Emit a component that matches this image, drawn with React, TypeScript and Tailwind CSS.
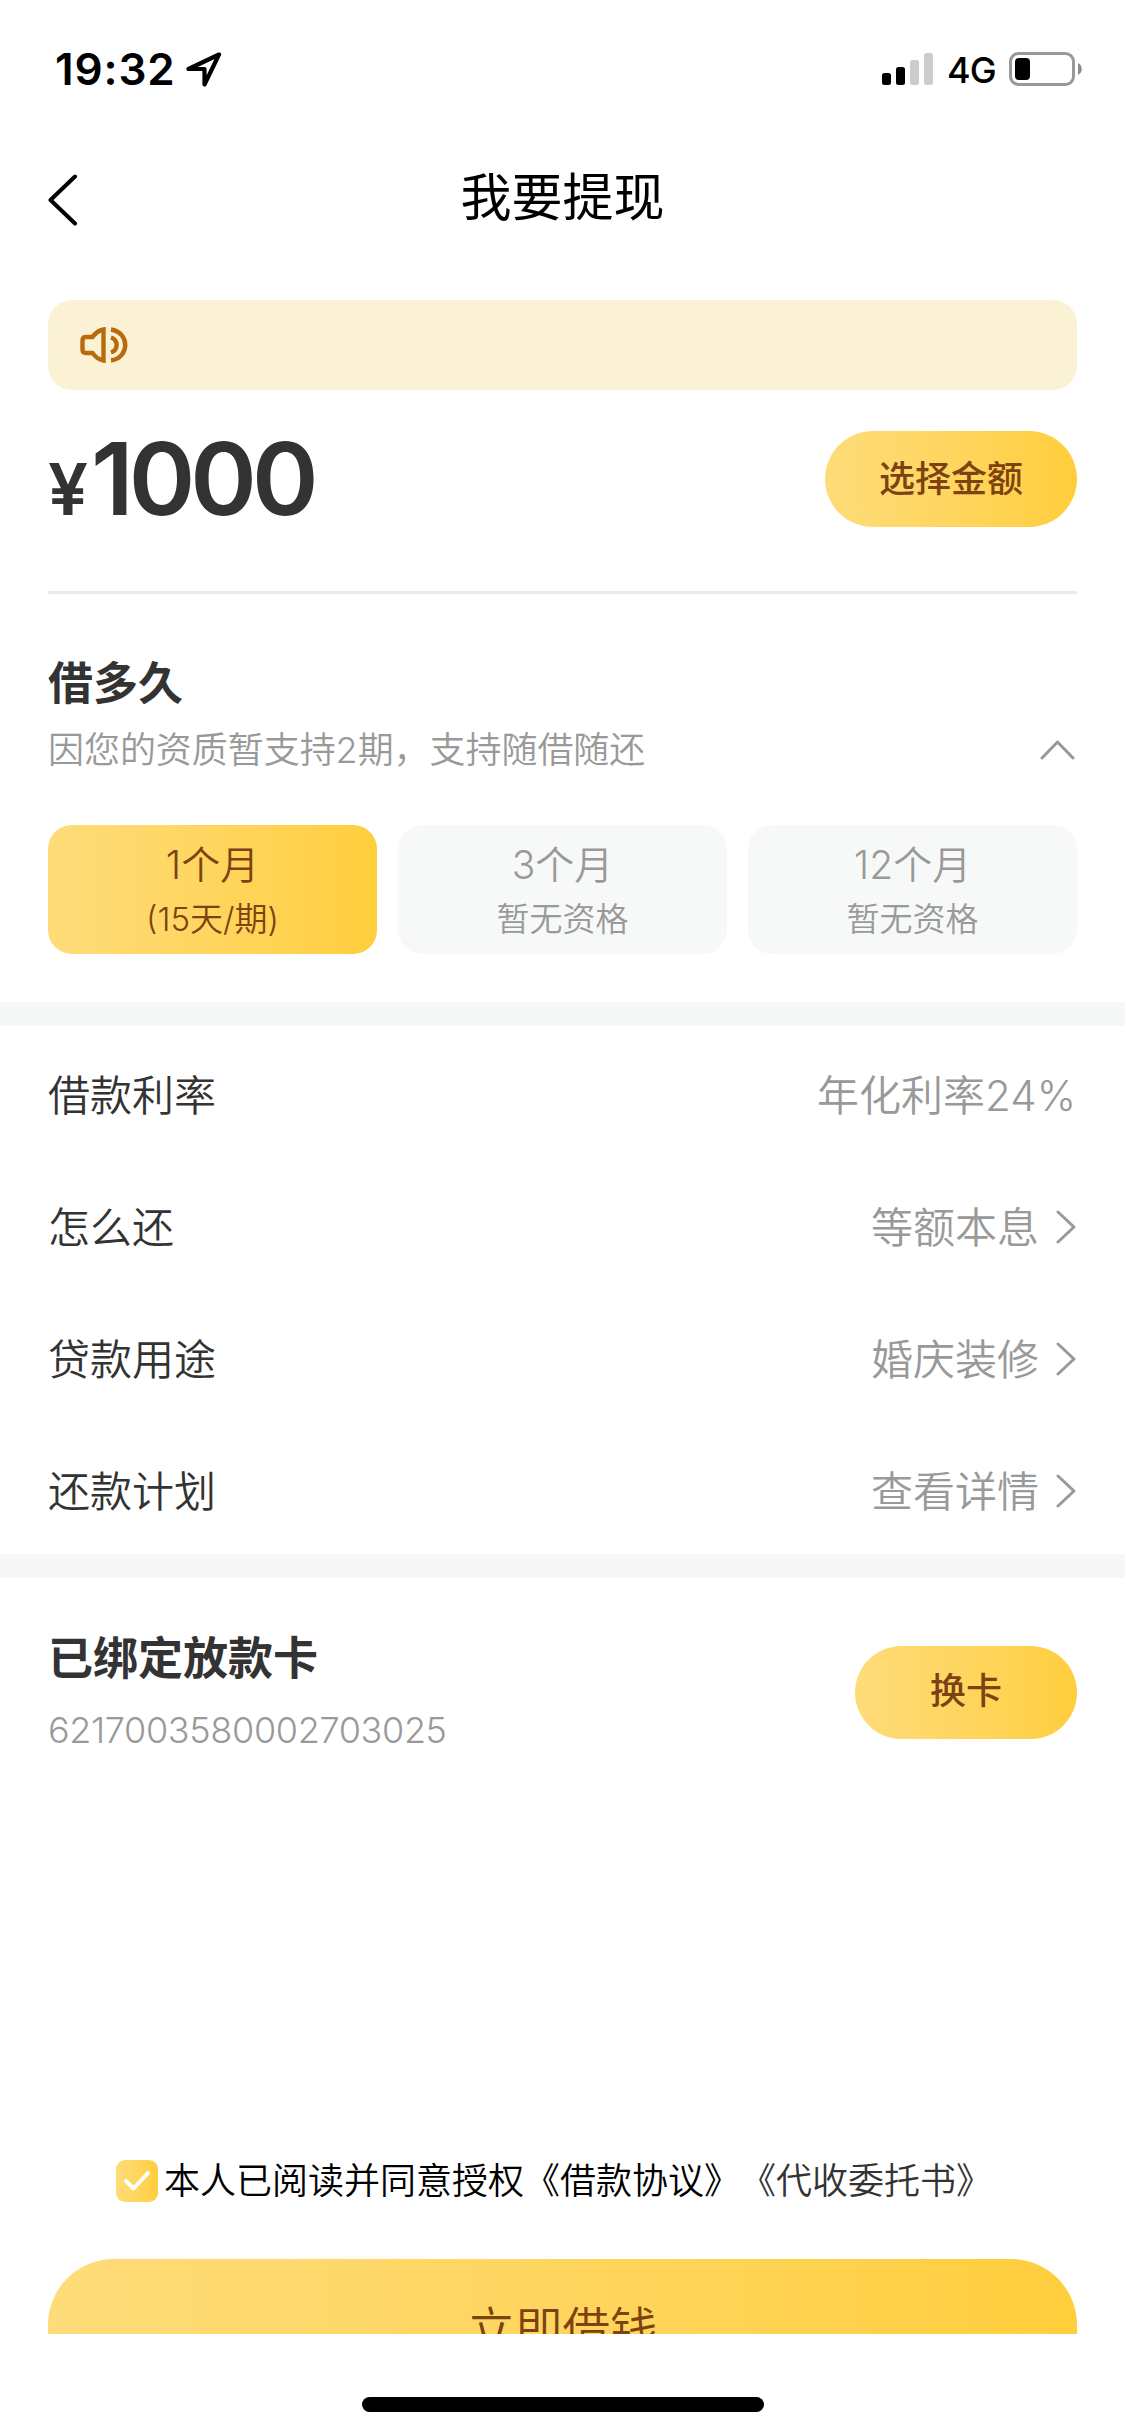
import { useState } from "react";
import clsx from "clsx";

const terms = [
    { label: "1个月", note: "(15天/期)", enabled: true },
    { label: "3个月", note: "暂无资格", enabled: false },
    { label: "12个月", note: "暂无资格", enabled: false },
];

const details = [
    { label: "借款利率", value: "年化利率24%", link: false },
    { label: "怎么还", value: "等额本息", link: true },
    { label: "贷款用途", value: "婚庆装修", link: true },
    { label: "还款计划", value: "查看详情", link: true },
];

function StatusBar() {
    return (
        <div className="flex h-[132px] items-start justify-between pt-[52px] pr-[43px] pl-[55px] text-black">
            <div className="flex items-start">
                <span className="w-[131px] text-[44px] leading-[35px] font-semibold tracking-[0.9px] whitespace-nowrap">19:32</span>
                <svg width="36" height="36" viewBox="0 0 36 36" fill="none" stroke="currentColor" strokeWidth="4.2" strokeLinejoin="round">
                    <path d="M33 2.5 2.5 17H18.5V32.5Z" />
                </svg>
            </div>
            <div className="flex items-start">
                <svg width="52" height="34" viewBox="0 0 52 34">
                    <rect x="0" y="21" width="9" height="12" rx="2.5" />
                    <rect x="14" y="15" width="9" height="18" rx="2.5" />
                    <rect x="28" y="8" width="9" height="25" rx="2.5" fill="#cccccc" />
                    <rect x="42" y="1" width="9" height="32" rx="2.5" fill="#cccccc" />
                </svg>
                <span className="ml-[13px] w-[62px] text-[36px] leading-[36px] font-[450] tracking-[-1px]">4G</span>
                <svg width="73" height="34" viewBox="0 0 73 34">
                    <rect x="1.5" y="1.5" width="63" height="31" rx="8" fill="none" stroke="#999999" strokeWidth="3" />
                    <rect x="6" y="6" width="15" height="22" rx="4" />
                    <path d="M69 11c5 2.500 5 9.500 0 12z" fill="#8c8c8c" />
                </svg>
            </div>
        </div>
    );
}

function NavBar() {
    return (
        <div className="flex h-[132px] items-center px-12">
            <button className="flex-1" aria-label="返回">
                <svg width="30" height="52" viewBox="0 0 30 52" fill="none" stroke="#000" strokeWidth="4" strokeLinecap="round" strokeLinejoin="round" className="mt-[3px]">
                    <path d="M27 2.500 2.500 26 27 49.500" />
                </svg>
            </button>
            <h1 className="pb-[2px] text-[51px] leading-none text-black">我要提现</h1>
            <div className="flex-1" />
        </div>
    );
}

function SpeakerIcon() {
    return (
        <svg width="48" height="36" viewBox="0 0 48 36" fill="none" stroke="#b86b0b" strokeWidth="4.4">
            <path d="M23.500 2.500C18.500 3.500 15 6.500 12.500 10H6Q2.500 10 2.500 13.500V22.500Q2.500 26 6 26H12.500C15 29.500 18.500 32.500 23.500 33.500Z" />
            <path d="M31 2.500C50 5.500 50 30.500 31 33.500" />
            <path d="M31 10.500C38.500 13 38.500 23 31 25.500" />
        </svg>
    );
}

function Chevron({ up }: { up?: boolean }) {
    return up ? (
        <svg width="36" height="20" viewBox="0 0 36 20" fill="none" stroke="#999999" strokeWidth="3" strokeLinecap="round" strokeLinejoin="round">
            <path d="M2 18 17.500 2 33 18" />
        </svg>
    ) : (
        <svg width="20" height="34" viewBox="0 0 20 34" fill="none" stroke="#999999" strokeWidth="3" strokeLinecap="round" strokeLinejoin="round">
            <path d="M2 2 18 17 2 32" />
        </svg>
    );
}

export default function App() {
    const [term, setTerm] = useState(0);
    const [agreed, setAgreed] = useState(true);

    return (
        <div className="flex h-[2436px] w-[1125px] flex-col overflow-hidden bg-white font-['Inter','Noto_Sans_CJK_SC',sans-serif] text-[#333333]">
            <StatusBar />
            <NavBar />

            <main className="h-[2070px] overflow-hidden pt-9">
                <div className="mx-12 flex h-[90px] items-center rounded-[24px] bg-[#fbf2d6] pl-8">
                    <SpeakerIcon />
                </div>

                <section className="mx-12 flex h-[204px] items-start justify-between border-b-[3px] border-[#ebebeb] pt-[41px]">
                    <div className="flex items-baseline pt-[2px] leading-[90px] font-semibold">
                        <span className="w-[43px] text-[71px] tracking-[-2px]">¥</span>
                        <span className="text-[101px] tracking-[-5px]">1000</span>
                    </div>
                    <button className="h-24 w-[252px] rounded-full bg-linear-to-r from-[#fedc79] to-[#ffce3b] text-[36px] font-medium text-[#7d4211]">
                        选择金额
                    </button>
                </section>

                <section className="h-[408px] px-12 pt-[60px]">
                    <h2 className="text-[45px] leading-[60px] font-bold">借多久</h2>
                    <div className="mt-[9px] flex h-[54px] items-center justify-between pr-[1px]">
                        <p className="text-[36px] leading-[54px] font-[350] tracking-[-0.05px] text-[#999999]">因您的资质暂支持2期，支持随借随还</p>
                        <Chevron up />
                    </div>
                    <div className="mt-12 grid grid-cols-3 gap-[21px]">
                        {terms.map((item, i) => (
                            <button
                                key={item.label}
                                disabled={!item.enabled}
                                onClick={() => setTerm(i)}
                                className={clsx(
                                    "flex h-[129px] flex-col items-center justify-center rounded-[24px] pt-1 font-[350]",
                                    term === i ? "bg-linear-to-r from-[#fedc79] to-[#ffce3b] text-[#7d4211]" : "bg-[#f7f9f8] text-[#999999]",
                                )}
                            >
                                <span className="text-[39px] leading-[54px]">{item.label}</span>
                                <span className="text-[33px] leading-[54px]">{item.note}</span>
                            </button>
                        ))}
                    </div>
                </section>

                <section className="border-y-[24px] border-[#f6f8f8] px-12">
                    {details.map((row) => (
                        <div key={row.label} className="flex h-[132px] items-center justify-between pt-[6px] text-[42px] font-[350]">
                            <span>{row.label}</span>
                            <span className="flex items-center gap-[17px] pr-[1px] text-[#999999]">
                                {row.value}
                                {row.link && <Chevron />}
                            </span>
                        </div>
                    ))}
                </section>

                <section className="flex h-[582px] items-start justify-between px-12">
                    <div className="pt-[51px]">
                        <h2 className="text-[45px] leading-[60px] font-bold">已绑定放款卡</h2>
                        <p className="mt-[14px] text-[36px] leading-[54px] font-[350] tracking-[-0.35px] text-[#999999]">6217003580002703025</p>
                    </div>
                    <button className="mt-[68px] h-[93px] w-[222px] rounded-full bg-linear-to-r from-[#fedc79] to-[#ffce3b] pb-[3px] text-[36px] font-medium text-[#7d4211]">
                        换卡
                    </button>
                </section>

                <div className="flex h-[99px] items-start pl-[116px] text-[36px] leading-[43px] font-[350] text-black">
                    <button
                        aria-label="同意"
                        onClick={() => setAgreed(!agreed)}
                        className="mr-[6px] flex size-[42px] items-center justify-center rounded-[9px] bg-linear-to-r from-[#fedc79] to-[#ffce3b]"
                    >
                        {agreed && (
                            <svg width="28" height="22" viewBox="0 0 28 22" fill="none" stroke="#fff" strokeWidth="4" strokeLinecap="round" strokeLinejoin="round">
                                <path d="M3 11 10.500 18.500 25 3" />
                            </svg>
                        )}
                    </button>
                    <p className="whitespace-nowrap [text-spacing-trim:space-all]">
                        本人已阅读并同意授权<span>《借款协议》</span>
                        <span className="text-[#333333]">《代收委托书》</span>
                    </p>
                </div>

                {/* runs past the bottom of the scroll area */}
                <button className="mx-12 block h-36 w-[1029px] rounded-[66px] bg-linear-to-r from-[#fedc79] to-[#ffce3b] pb-[3px] text-[47.5px] font-[350] text-[#7d4211]">
                    立即借钱
                </button>
            </main>

            <footer className="flex flex-1 items-start justify-center bg-white pt-[63px]">
                <div className="h-[15px] w-[402px] rounded-full bg-black" />
            </footer>
        </div>
    );
}
